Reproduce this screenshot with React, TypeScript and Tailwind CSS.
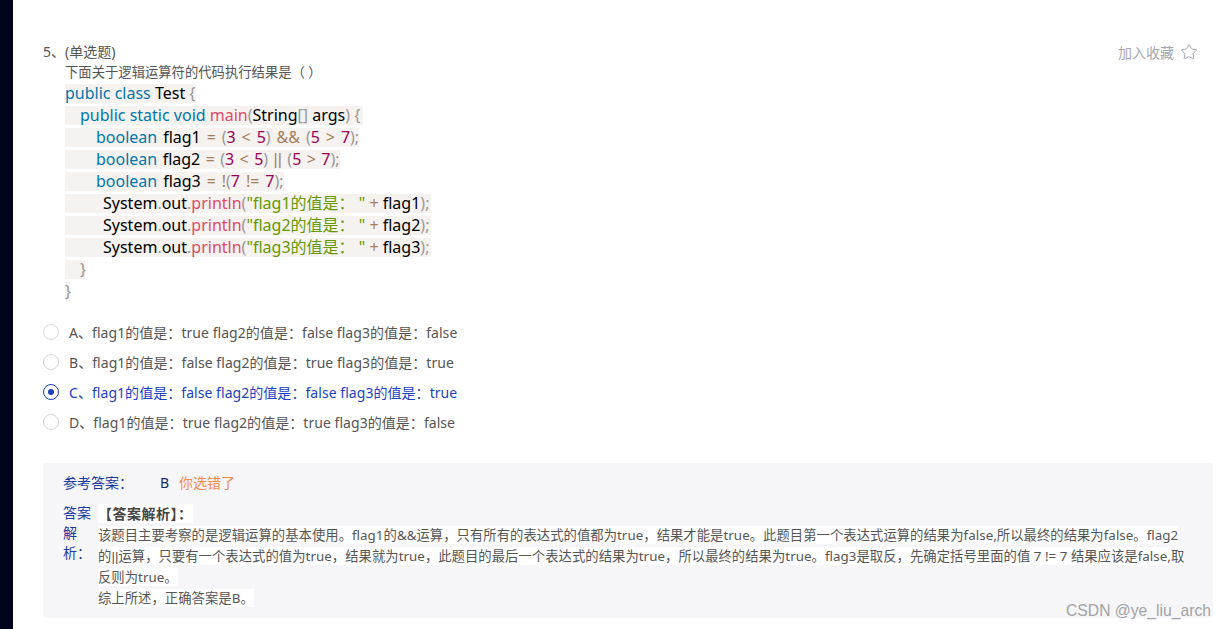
import React from "react";
import { Star } from "lucide-react";

const K = ({ children }: { children: React.ReactNode }) => <span className="text-[#07a]">{children}</span>;
const P = ({ children }: { children: React.ReactNode }) => <span className="text-[#999]">{children}</span>;
const F = ({ children }: { children: React.ReactNode }) => <span className="text-[#dd4a68]">{children}</span>;
const N = ({ children }: { children: React.ReactNode }) => <span className="text-[#905]">{children}</span>;
const O = ({ children }: { children: React.ReactNode }) => <span className="text-[#a67f59]">{children}</span>;
const S = ({ children }: { children: React.ReactNode }) => <span className="text-[#690]">{children}</span>;

// full-width punctuation
const COLON = "\uFF1A";
const COMMA = "\uFF0C";

function CodeLine({ className, children }: { className: string; children: React.ReactNode }) {
  return (
    <div className="h-[22px]">
      <div className={`h-[19px] leading-[19px] bg-[#f5f2f0] whitespace-pre text-black ${className}`}>{children}</div>
    </div>
  );
}

function PrintLine({ n }: { n: number }) {
  return (
    <CodeLine className="w-[366px] pl-[38px]">
      System<P>.</P>out<P>.</P>
      <F>println</F>
      <P>(</P>
      <S>{`"flag${n}的值是${COLON} "`}</S> <O>+</O> flag{n}
      <P>);</P>
    </CodeLine>
  );
}

const options = [
  { text: `A、flag1的值是${COLON}true flag2的值是${COLON}false flag3的值是${COLON}false` },
  { text: `B、flag1的值是${COLON}false flag2的值是${COLON}true flag3的值是${COLON}true` },
  { text: `C、flag1的值是${COLON}false flag2的值是${COLON}false flag3的值是${COLON}true`, selected: true },
  { text: `D、flag1的值是${COLON}true flag2的值是${COLON}true flag3的值是${COLON}false` },
];

const Bars = () => <span className="font-['Liberation_Sans',sans-serif]">||</span>;

export default function App() {
  return (
    <div className="relative flex h-[629px] w-[1225px] overflow-hidden bg-white font-['Noto_Sans','Noto_Sans_CJK_SC',sans-serif] text-[14px] text-[#555]">
      <div className="w-[13px] shrink-0 bg-[#00031a]" />
      <div className="w-[1200px] pl-[30px] pt-[42px]">
        <div className="flex items-start justify-between pr-[15px]">
          <div className="flex h-[20px] items-center leading-[20px]">
            <span className="w-[22px]">5、</span>
            <span>(单选题)</span>
          </div>
          <div className="flex h-[20px] items-center gap-[6px] text-[#a3a6b0]">
            <span>加入收藏</span>
            <Star size={18} strokeWidth={1.3} />
          </div>
        </div>

        <div className="pl-[22px]">
          <div className="h-[20px] text-[13.33px] leading-[20px]">下面关于逻辑运算符的代码执行结果是{"\uFF08 \uFF09"}</div>
          <div className="mt-[2px] text-[16px]">
            <CodeLine className="w-[131px]">
              <K>public class</K> Test <P>{"{"}</P>
            </CodeLine>
            <CodeLine className="w-[298px] pl-[15px]">
              <K>public static void</K> <F>main</F>
              <P>(</P>String<P>[]</P> args<P>)</P> <P>{"{"}</P>
            </CodeLine>
            <CodeLine className="w-[294px] pl-[31px] [word-spacing:1.75px]">
              <K>boolean</K> flag1 <O>=</O> <P>(</P>
              <N>3</N> <O>&lt;</O> <N>5</N>
              <P>)</P> <O>&amp;&amp;</O> <P>(</P>
              <N>5</N> <O>&gt;</O> <N>7</N>
              <P>);</P>
            </CodeLine>
            <CodeLine className="w-[275px] pl-[31px] [word-spacing:1.25px]">
              <K>boolean</K> flag2 <O>=</O> <P>(</P>
              <N>3</N> <O>&lt;</O> <N>5</N>
              <P>)</P>{" "}
              <O>
                <Bars />
              </O>{" "}
              <P>(</P>
              <N>5</N> <O>&gt;</O> <N>7</N>
              <P>);</P>
            </CodeLine>
            <CodeLine className="w-[219px] pl-[31px] [word-spacing:1.75px]">
              <K>boolean</K> flag3 <O>=</O> <O>!</O>
              <P>(</P>
              <N>7</N> <O>!=</O> <N>7</N>
              <P>);</P>
            </CodeLine>
            <PrintLine n={1} />
            <PrintLine n={2} />
            <PrintLine n={3} />
            <CodeLine className="w-[20px] pl-[15px]">
              <P>{"}"}</P>
            </CodeLine>
            <CodeLine className="w-[5px]">
              <P>{"}"}</P>
            </CodeLine>
          </div>
        </div>

        <div className="mt-[13px] flex flex-col">
          {options.map((o) => (
            <div key={o.text} className="flex h-[30px] items-center gap-[10px]">
              {o.selected ? (
                <span className="flex size-[16px] items-center justify-center rounded-full border border-[#1a3fb5]">
                  <span className="size-[6px] rounded-full bg-[#1a3fb5]" />
                </span>
              ) : (
                <span className="size-[16px] rounded-full border border-[#d5d8e0]" />
              )}
              <span className={`tracking-[0.05px] ${o.selected ? "text-[#1a3fc4]" : ""}`}>{o.text}</span>
            </div>
          ))}
        </div>

        <div className="mt-[26px] h-[155px] w-[1170px] rounded-[4px] bg-[#f6f6f8] pl-[20px] pt-[10px]">
          <div className="flex h-[20px] items-center leading-[20px]">
            <span className="w-[97px] text-[#1a3a9f]">参考答案{COLON}</span>
            <span className="w-[19px] text-[#1a2a6c]">B</span>
            <span className="text-[#f58a4b]">你选错了</span>
          </div>
          <div className="mt-[10px] flex">
            <div className="w-[28px] shrink-0 leading-[20px] text-[#1a3a9f]">
              <div>答案</div>
              <div>解</div>
              <div>析{COLON}</div>
            </div>
            <div className="ml-[7px] text-[13.33px] leading-[21px] tracking-[0.04px]">
              <div>
                <span className="bg-white text-[14px] font-bold tracking-[0.5px] text-[#444]">【答案解析】{COLON}</span>
              </div>
              <div className="whitespace-pre">
                <span className="bg-white">
                  该题目主要考察的是逻辑运算的基本使用。flag1的&amp;&amp;运算{COMMA}只有所有的表达式的值都为true{COMMA}结果才能是true。此题目第一个表达式运算的结果为false,所以最终的结果为false。flag2
                </span>
              </div>
              <div className="whitespace-pre">
                <span className="bg-white">
                  的<Bars />运算{COMMA}只要有一个表达式的值为true{COMMA}结果就为true{COMMA}此题目的最后一个表达式的结果为true{COMMA}所以最终的结果为true。flag3是取反{COMMA}先确定括号里面的值 7 != 7 结果应该是false,取
                </span>
              </div>
              <div className="whitespace-pre">
                <span className="bg-white">反则为true。</span>
              </div>
              <div className="whitespace-pre">
                <span className="bg-white">综上所述{COMMA}正确答案是B。</span>
              </div>
            </div>
          </div>
        </div>
      </div>
      <div className="absolute bottom-[9px] right-[14px] font-['Liberation_Sans',sans-serif] text-[15.7px] leading-[18px] text-[#a3a3a3]">
        CSDN @ye_liu_arch
      </div>
    </div>
  );
}
